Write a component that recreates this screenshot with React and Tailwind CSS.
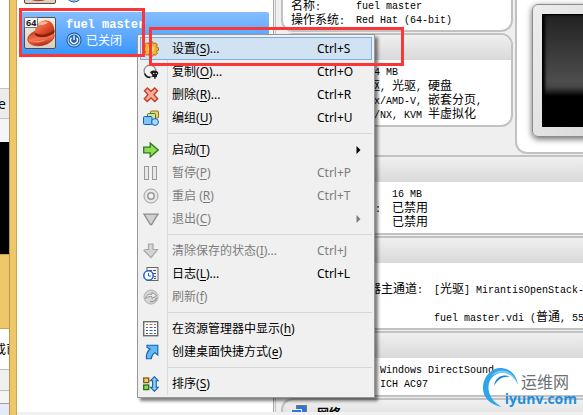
import { Fragment } from 'react';

const MONO = "font-['Liberation_Mono','Noto_Sans_CJK_SC',monospace]";

// El texto chino va a 12px y el latino a 10px para mantener la rejilla de 6px
const Mixed = ({ children }) => (
  <>
    {children.split(/([\u4e00-\u9fff]+)/).map((part, i) =>
      i % 2 ? (
        <span key={i} className="text-xs leading-[14px]">
          {part}
        </span>
      ) : (
        part
      )
    )}
  </>
);

const icons = {
  gear: (
    <g stroke="#a8700f">
      <path
        d="M6.4.8h3.2l.6 1.9 2.400-.9 1.700 2.200-1 1.700 2.100 1v2.700l-2.100 1 1 1.900-1.900 2-2-.8-.8 1.800H6.400l-.8-1.900-2.100.9-1.900-2 1-1.900-2-1V6.700l2-1-1-1.800 1.900-2 2.100.8z"
        fill="#f0b238"
      />
      <circle cx="8" cy="8" r="3.900" fill="#fbd566" stroke="#eeb030" />
    </g>
  ),
  copy: (
    <g>
      <circle cx="7" cy="7" r="5.900" fill="#f3f3f3" stroke="#8b8b8b" strokeWidth="1.200" />
      <path d="M1.600 9.500a5.900 5.900 0 0 0 5.800 4" fill="none" stroke="#222" strokeWidth="1.500" />
      <path
        d="M7 8.300c1.500-2.600 8-2.500 8.300.7 0 1.200-.6 1.700-1.300 2.100V13h-1.300v1.800h-1.500V13H9.300v-2z"
        fill="#1c1c1c"
      />
      <path d="M10 9.500h1.500M12.700 9.500h1.200" stroke="#ccc" />
    </g>
  ),
  remove: (
    <path
      d="M1.500 3.800L4.300 1l3.700 3.300L11.700 1l2.800 2.800L11 7.700l3.700 4-2.900 2.800L8 10.900l-3.800 3.600-2.900-2.800L5 7.700z"
      fill="#f5ad9b"
      stroke="#c5402a"
      strokeWidth="1.400"
    />
  ),
  group: (
    <g>
      <rect x="7.500" y="1" width="8" height="7" rx="1" fill="#f4cf72" stroke="#96711c" />
      <rect x="4.500" y="3.500" width="8" height="7" rx="1" fill="#c5e8a8" stroke="#3d7f23" />
      <rect x=".5" y="6.500" width="8.500" height="8" rx="1" fill="#7fc3f7" stroke="#1460ad" />
      <circle cx="12" cy="12" r="3.400" fill="#a8daff" stroke="#1460ad" />
    </g>
  ),
  start: (
    <path
      d="M.7 5.200h6.500V1l8 7-8 7v-4.200H.7z"
      fill="#8fdc55"
      stroke="#2d7a16"
      strokeWidth="1.300"
    />
  ),
  pause: (
    <g fill="#e8e8e8" stroke="#9a9a9a">
      <rect x="1.500" y="1.500" width="4" height="13" />
      <rect x="9.500" y="1.500" width="4" height="13" />
    </g>
  ),
  reset: (
    <g fill="none">
      <circle cx="8" cy="8" r="7" fill="#e8e8e8" stroke="#a0a0a0" />
      <circle cx="8" cy="8" r="3.200" fill="#f4f4f4" stroke="#9a9a9a" strokeWidth="1.500" />
    </g>
  ),
  close: <path d="M1 3.200h14L8.600 13.500H7.400z" fill="#d0d0d0" stroke="#8c8c8c" strokeWidth="1.300" />,
  discard: (
    <path
      d="M5.500 1h4.500v5.500h4.500L8 14.700 1 7.500l1.500-1h3z"
      fill="#d3d3d3"
      stroke="#a5a5a5"
      strokeWidth="1.200"
    />
  ),
  log: (
    <g>
      <rect x="4" y="1.500" width="11" height="13" fill="#f3f3f3" stroke="#666" />
      <path d="M6 4.500h3M10 4.500h3M10 7.500h3M11 10.500h2M11 12.500h2" stroke="#555" />
      <circle cx="5.500" cy="9.500" r="4.700" fill="#fff" stroke="#1c63c4" strokeWidth="1.500" />
      <path d="M5.500 7v3H8" fill="none" stroke="#1c63c4" />
    </g>
  ),
  refresh: (
    <g fill="none">
      <circle cx="8" cy="8" r="7" fill="#d6d6d6" stroke="#b0b0b0" />
      <path
        d="M2.500 9.500C3 6 6 4.500 9 5.500V3.200l4.500 3.300L9 9.500V7.700c-2-.7-4.500 0-6.500 1.800z"
        fill="#f0f0f0"
        stroke="#949494"
      />
      <path d="M13.500 8.500c-.5 3-3 4.500-6.500 4" stroke="#949494" strokeWidth="1.200" />
    </g>
  ),
  explorer: (
    <g>
      <rect x=".7" y=".7" width="14" height="14" fill="#fff" stroke="#6b6b6b" strokeWidth="1.400" />
      <path d="M3 3.500h2M6.500 3.500h3M11 3.500h2" stroke="#b8743a" />
      <path
        d="M3 6.500h2M6.500 6.500h3M11 6.500h2M3 9.500h2M6.500 9.500h3M11 9.500h2M3 12.500h2M6.500 12.500h3M11 12.500h2"
        stroke="#3c62a0"
      />
    </g>
  ),
  shortcut: (
    <path
      d="M4 1.200h10.800V11l-3-2.400c-2.200 1.400-3.300 3-3.600 6.200H3.400C3 10.500 4.400 7.300 7 5L4 3.500z"
      fill="#63b9f7"
      stroke="#1661ad"
      strokeWidth="1.100"
    />
  ),
  sort: (
    <g>
      <rect x=".7" y="2" width="5" height="4.600" fill="#f5cf6c" stroke="#7c5a10" strokeWidth="1.300" />
      <rect x=".7" y="9" width="5" height="4.600" fill="#8ed653" stroke="#2f6b18" strokeWidth="1.300" />
      <path
        d="M11.400.7l4 4.100h-2.200v6.400h2.200l-4 4.100-4-4.100h2.200V4.800H7.400z"
        fill="#8fcdfa"
        stroke="#1661ad"
        strokeWidth="1.100"
      />
    </g>
  ),
};

const Icon = ({ name }) => (
  <svg viewBox="0 0 16 16" className="h-4 w-4" aria-hidden="true">
    {icons[name]}
  </svg>
);

const menuGroups = [
  [
    { icon: 'gear', label: '设置', hotkey: 'S', tail: '...', shortcut: 'Ctrl+S', active: true },
    { icon: 'copy', label: '复制', hotkey: 'O', tail: '...', shortcut: 'Ctrl+O' },
    { icon: 'remove', label: '删除', hotkey: 'R', tail: '...', shortcut: 'Ctrl+R' },
    { icon: 'group', label: '编组', hotkey: 'U', shortcut: 'Ctrl+U' },
  ],
  [
    { icon: 'start', label: '启动', hotkey: 'T', submenu: true },
    { icon: 'pause', label: '暂停', hotkey: 'P', shortcut: 'Ctrl+P', disabled: true },
    { icon: 'reset', label: '重启 ', hotkey: 'R', shortcut: 'Ctrl+T', disabled: true },
    { icon: 'close', label: '退出', hotkey: 'C', submenu: true, disabled: true },
  ],
  [
    { icon: 'discard', label: '清除保存的状态', hotkey: 'I', tail: '...', shortcut: 'Ctrl+J', disabled: true },
    { icon: 'log', label: '日志', hotkey: 'L', tail: '...', shortcut: 'Ctrl+L' },
    { icon: 'refresh', label: '刷新', hotkey: 'f', disabled: true },
  ],
  [
    { icon: 'explorer', label: '在资源管理器中显示', hotkey: 'h' },
    { icon: 'shortcut', label: '创建桌面快捷方式', hotkey: 'e' },
  ],
  [{ icon: 'sort', label: '排序', hotkey: 'S' }],
];

const MenuItem = ({ item }) => (
  <button
    type="button"
    role="menuitem"
    disabled={item.disabled}
    className={`flex h-[23px] w-full items-center border text-left disabled:text-[#7d7d7d] ${
      item.active ? 'border-[#78aee5] bg-[#d1e2f2]' : 'border-transparent'
    }`}
  >
    <span className="w-[31px] pl-0.5">
      <Icon name={item.icon} />
    </span>
    <span className="flex-1 whitespace-pre">
      {item.label}(<u className="underline-offset-2">{item.hotkey}</u>){item.tail}
    </span>
    {item.shortcut && <span className="w-[54px]">{item.shortcut}</span>}
    {item.submenu && (
      <svg viewBox="0 0 5 8" className="mr-2.5 h-2 w-[5px]" fill="currentColor" aria-hidden="true">
        <path d="M.5 0l4 4-4 4z" />
      </svg>
    )}
  </button>
);

const ContextMenu = () => (
  <div
    role="menu"
    className="absolute top-[34px] left-[137px] w-[238px] border border-[#979797] bg-[#f0f0f0] bg-[linear-gradient(#dcdcdc,#dcdcdc)] bg-[length:1px_358px] bg-[position:29px_2px] bg-no-repeat p-0.5 font-['Noto_Sans','Noto_Sans_CJK_SC',sans-serif] text-xs text-black shadow-[3px_3px_3px_rgba(0,0,0,0.5)]"
  >
    {menuGroups.map((group, i) => (
      <Fragment key={i}>
        {i > 0 && <div role="separator" className="my-1 ml-7 h-px bg-[#d7d7d7]" />}
        {group.map(item => (
          <MenuItem key={item.label} item={item} />
        ))}
      </Fragment>
    ))}
  </div>
);

const RedHat = () => (
  <svg viewBox="0 0 32 32" className="h-8 w-8 shrink-0" aria-hidden="true">
    <defs>
      <linearGradient id="tile" x1="0" y1="0" x2="0" y2="1">
        <stop offset="0" stopColor="#f4f0ea" />
        <stop offset="1" stopColor="#d9cdbf" />
      </linearGradient>
      <linearGradient id="crown" x1="0" y1="0" x2="1" y2="1">
        <stop offset="0" stopColor="#ff9a70" />
        <stop offset=".5" stopColor="#e5502c" />
        <stop offset="1" stopColor="#a3200e" />
      </linearGradient>
      <linearGradient id="brim" x1="0" y1="0" x2="0" y2="1">
        <stop offset="0" stopColor="#c8381c" />
        <stop offset=".55" stopColor="#f77450" />
        <stop offset="1" stopColor="#b32812" />
      </linearGradient>
    </defs>
    <rect x=".5" y=".5" width="31" height="31" rx="1.500" fill="url(#tile)" stroke="#5b4a44" />
    <ellipse cx="17" cy="20.500" rx="13.500" ry="8" transform="rotate(-12 17 20.500)" fill="url(#brim)" stroke="#a82c16" strokeWidth=".6" />
    <path d="M11 18c-1-7 2-13 9-14.500 6-1 10 3 10.500 10.500-4 6-15 8-19.500 4z" fill="url(#crown)" />
    <path d="M10.800 15.500c5 3.500 14 2 19.500-2.500l.3 2.500c-5 5-15 6.500-19.600 2.500z" fill="#8a2212" />
    <path d="M14 7.500c2-3 7-4 10-2-2 2-7 3.500-10 2z" fill="#ffb89e" />
    <path d="M6 23c4 2 12 1.500 18-1.500-5 4-14 5-18 1.500z" fill="#ff9878" />
    <rect x=".5" y=".5" width="13" height="10" rx="1" fill="#fafafa" stroke="#777" />
    <text x="2" y="9" className="font-['Open_Sans',sans-serif] text-[9px] font-bold" fill="#222">
      64
    </text>
  </svg>
);

const PowerIcon = () => (
  <svg viewBox="0 0 16 16" className="h-4 w-4 shrink-0" fill="none" aria-hidden="true">
    <circle cx="8" cy="8" r="7.500" fill="#164f8f" />
    <circle cx="8" cy="8" r="6" fill="#2767ac" stroke="#b9dcf8" strokeWidth="1.100" />
    <path d="M8 3.600v4.400M5.500 5.700a3.400 3.400 0 1 0 5 0" stroke="#fff" strokeWidth="1.300" />
  </svg>
);

const Machine = ({ name, status, selected }) => (
  <div
    className={`flex h-[42px] shrink-0 items-center gap-2.5 rounded-xs pl-[5px] ${
      selected ? 'bg-linear-to-b from-[#85bdff] to-[#3897ff]' : ''
    }`}
  >
    <RedHat />
    <div className="text-white">
      <div className={`${MONO} h-[14px] text-xs leading-[14px] font-bold`}>{name}</div>
      <div className="flex h-4 items-center gap-1">
        <PowerIcon />
        {status && (
          <span className="font-['Noto_Sans_CJK_SC',sans-serif] text-xs leading-4">{status}</span>
        )}
      </div>
    </div>
  </div>
);

const Rows = ({ columns, rows }) => (
  <dl className={`grid ${columns} auto-rows-[14px] overflow-hidden pl-2 whitespace-pre`}>
    {rows.map(([label, value], i) => (
      <Fragment key={i}>
        <dt>
          <Mixed>{label}</Mixed>
        </dt>
        <dd>
          <Mixed>{value}</Mixed>
        </dd>
      </Fragment>
    ))}
  </dl>
);

const Section = ({ shape, children }) => (
  <section className={`overflow-hidden border-2 border-[#c2c2c2] bg-white ${shape}`}>
    <div className="h-[25px] bg-linear-to-b from-[#f0f0f0] to-[#d9d9d9]" />
    <div className="pt-1.5 pb-[3px]">{children}</div>
  </section>
);

const Preview = () => (
  <div className="min-w-0 flex-1 overflow-hidden rounded-bl-xl border-b-2 border-l-2 border-[#c2c2c2] bg-white pt-1 pl-[15px]">
    <div className="-mr-3 h-[133px] rounded-md border border-[#8c8c8c] bg-linear-to-br from-[#ededed] to-[#dadada] p-[9px] shadow-[0_2px_6px_rgba(0,0,0,0.6)]">
      <div className="h-full border border-black bg-[linear-gradient(#222_0%,#4d4d4d_60%,#444_65%,#000_73%)] shadow-[inset_2px_0_3px_#000]" />
    </div>
  </div>
);

const Details = () => (
  <main
    className={`${MONO} flex min-w-0 flex-1 flex-col gap-px overflow-hidden bg-[#efefef] pl-[5px] text-[10px] leading-[14px] text-black`}
  >
    <div className="flex h-[154px] shrink-0 gap-0.5">
      <div className="flex w-[232px] shrink-0 flex-col gap-px">
        <section className="flex h-8 flex-col justify-end overflow-hidden rounded-b-xl border-2 border-t-0 border-[#c2c2c2] bg-white pb-[3px]">
          <Rows
            columns="grid-cols-[65px_1fr]"
            rows={[
              ['名称:', 'fuel master'],
              ['操作系统:', 'Red Hat (64-bit)'],
            ]}
          />
        </section>
        <Section shape="rounded-xl">
          <Rows
            columns="grid-cols-[65px_1fr]"
            rows={[
              ['', '1024 MB'],
              ['', '软驱, 光驱, 硬盘'],
              ['', 'VT-x/AMD-V, 嵌套分页,'],
              ['', 'PAE/NX, KVM 半虚拟化'],
            ]}
          />
        </Section>
      </div>
      <Preview />
    </div>
    <Section shape="shrink-0 rounded-l-xl border-r-0">
      <Rows
        columns="grid-cols-[101px_1fr]"
        rows={[
          ['', '16 MB'],
          ['远程桌面服务器:', '已禁用'],
          ['', '已禁用'],
        ]}
      />
    </Section>
    <Section shape="shrink-0 rounded-l-xl border-r-0">
      <Rows
        columns="grid-cols-[143px_1fr]"
        rows={[
          ['', ''],
          ['  第二IDE控制器主通道:', '[光驱] MirantisOpenStack-'],
          ['', ''],
          ['', 'fuel master.vdi (普通, 55'],
        ]}
      />
    </Section>
    <Section shape="shrink-0 rounded-l-xl border-r-0">
      <Rows
        columns="grid-cols-[89px_1fr]"
        rows={[
          ['', 'Windows DirectSound'],
          ['', 'ICH AC97'],
        ]}
      />
    </Section>
    <section className="shrink-0 rounded-tl-xl border-t-2 border-l-2 border-[#c2c2c2] bg-linear-to-b from-[#f0f0f0] to-[#d9d9d9]">
      <h2 className="flex h-[25px] items-center gap-2.5 pl-2 font-['Noto_Sans_CJK_SC',sans-serif] text-xs font-bold">
        <svg viewBox="0 0 16 16" className="h-4 w-4" aria-hidden="true">
          <rect x="5.500" y=".5" width="10" height="8" fill="#2b78d8" stroke="#777" />
          <rect x=".5" y="4.500" width="10" height="8" fill="#2b78d8" stroke="#eee" />
          <path d="M3 14.500h6" stroke="#777" />
        </svg>
        网络
      </h2>
    </section>
  </main>
);

// Ventana del navegador que asoma por detrás
const BackWindow = () => (
  <div className="flex w-[9px] shrink-0 flex-col overflow-hidden bg-white text-black">
    <div className="h-[88px] shrink-0" />
    <div className="flex h-[31px] shrink-0 items-center border-y border-[#c4c4c4] bg-[#ececec] font-['Open_Sans',sans-serif] text-sm">
      <span className="-ml-0.5">e</span>
    </div>
    <div className="h-[23px] shrink-0 bg-[#f4f5f8]" />
    <div className="h-28 shrink-0 bg-black" />
    <div className="h-[75px] shrink-0 border-y border-[#c9a352] bg-[#efc76b]" />
    <div className="flex h-10 shrink-0 items-center font-['Noto_Sans_CJK_SC',sans-serif] text-xs whitespace-nowrap">
      <span className="-ml-1.5">或已</span>
    </div>
    <div className="h-[22px] shrink-0 border-y border-[#bdbdbd] bg-[#f0f0ef]" />
    <div className="h-3 shrink-0 bg-[#f5f5f5]" />
    <div className="flex-1 border-t border-[#9aa0a8] bg-[#e2ebf7]" />
  </div>
);

const Watermark = () => (
  <div className="absolute right-1.5 bottom-2 flex items-end">
    <svg viewBox="0 0 38 40" className="-mr-[15px] h-10 w-[38px]" aria-hidden="true">
      <path
        d="M36 18C33 9 26 4 18 6 9 8 5 16 7 25c2 7 6 11 13 15C8 38 0 30 1 19 2 8 11 0 20 1c9 1 15 8 16 17z"
        fill="#2fa4ea"
      />
      <path d="M35 16C29 5 18 3 9 9 16 0 31 2 35 16z" fill="#7ccbf5" />
      <path d="M12 19C13 11 20 6 28 10c-7-1-12 2-16 9z" fill="#1787d4" />
    </svg>
    <div className="flex flex-col items-center">
      <span className="pl-2 font-['Noto_Sans_CJK_SC',sans-serif] text-base leading-5 text-[#6b7075]">
        运维网
      </span>
      <span className="font-['Open_Sans',sans-serif] text-sm leading-4 font-bold text-[#1f8fe0]">
        iyunv.com
      </span>
    </div>
  </div>
);

export default function App() {
  return (
    <div className="relative flex h-screen overflow-hidden">
      <BackWindow />
      <div className="flex min-w-0 flex-1 flex-col border-l border-[#b8964c]">
        <div className="flex min-h-0 flex-1">
          <div className="w-[7px] shrink-0 border-r border-[#cfa44c] bg-[#efc76b]" />
          <aside className="flex w-[257px] shrink-0 flex-col overflow-hidden border-r border-[#a8a8a8] bg-white pr-1 pl-0.5">
            <div className="flex h-3 shrink-0 flex-col justify-end pb-[3px]">
              <Machine />
            </div>
            <Machine name="fuel master" status="已关闭" selected />
          </aside>
          <div className="w-0.5 shrink-0 border-r border-[#c2c2c2] bg-[#efefef]" />
          <Details />
        </div>
        <div className="flex h-[3px] shrink-0">
          <div className="w-[7px] shrink-0 border-r border-[#cfa44c] bg-[#efc76b]" />
          <div className="flex-1 bg-[#f0f0f0]" />
        </div>
      </div>

      <ContextMenu />
      <Watermark />

      {/* Marcas rojas de la guía */}
      <div className="pointer-events-none absolute top-2 left-[19px] h-[49px] w-[126px] border-3 border-[#fb3638]" />
      <div className="pointer-events-none absolute top-[27px] left-[149px] h-[39px] w-[255px] border-3 border-[#fb3638]" />
    </div>
  );
}
